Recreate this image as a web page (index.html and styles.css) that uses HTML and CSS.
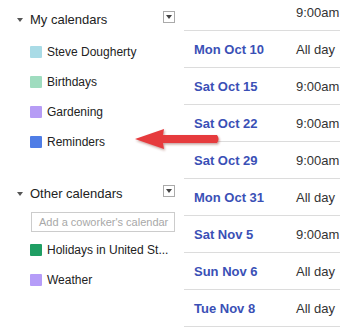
FILE: index.html
```html
<!DOCTYPE html>
<html lang="en">
<head>
    <meta charset="UTF-8">
    <title>Calendars</title>
    <link rel="stylesheet" href="styles.css">
</head>
<body>
    <div class="page">
        <div class="sidebar">
            <div class="group-head">
                <span class="caret"></span>
                <span class="group-title">My calendars</span>
                <span class="menu-btn"><span class="menu-caret"></span></span>
            </div>
            <div class="cal"><span class="swatch" style="background:#a9dbe6"></span>Steve Dougherty</div>
            <div class="cal"><span class="swatch" style="background:#9fdcbf"></span>Birthdays</div>
            <div class="cal"><span class="swatch" style="background:#b69cf5"></span>Gardening</div>
            <div class="cal"><span class="swatch" style="background:#4f7de6"></span>Reminders</div>

            <div class="group-head other">
                <span class="caret"></span>
                <span class="group-title">Other calendars</span>
                <span class="menu-btn"><span class="menu-caret"></span></span>
            </div>
            <div class="add-box">Add a coworker's calendar</div>
            <div class="cal"><span class="swatch" style="background:#1f9e63"></span>Holidays in United St...</div>
            <div class="cal"><span class="swatch" style="background:#b59cf8"></span>Weather</div>
        </div>

        <div class="agenda">
            <div class="row"><span class="date"></span><span class="time">9:00am</span></div>
            <div class="row"><span class="date">Mon Oct 10</span><span class="time">All day</span></div>
            <div class="row"><span class="date">Sat Oct 15</span><span class="time">9:00am</span></div>
            <div class="row"><span class="date">Sat Oct 22</span><span class="time">9:00am</span></div>
            <div class="row"><span class="date">Sat Oct 29</span><span class="time">9:00am</span></div>
            <div class="row"><span class="date">Mon Oct 31</span><span class="time">All day</span></div>
            <div class="row"><span class="date">Sat Nov 5</span><span class="time">9:00am</span></div>
            <div class="row"><span class="date">Sun Nov 6</span><span class="time">All day</span></div>
            <div class="row"><span class="date">Tue Nov 8</span><span class="time">All day</span></div>
        </div>

        <svg class="arrow" width="100" height="30" viewBox="0 0 100 30">
            <defs>
                <filter id="sh" x="-10%" y="-30%" width="120%" height="160%">
                    <feDropShadow dx="1" dy="1.5" stdDeviation="1.2" flood-color="#7a2a20" flood-opacity="0.45"/>
                </filter>
            </defs>
            <path d="M4 14 L33 4 L32 10 L86 10 Q89 14 86 18 L32 18 L33 24 Z" fill="#e63b3e" filter="url(#sh)"/>
        </svg>
    </div>
</body>
</html>
```

FILE: styles.css
```css
body {
    margin: 0;
    background: #fff;
    font-family: Arial, "Liberation Sans", sans-serif;
    color: #222;
}
.page {
    position: relative;
    display: flex;
    width: 340px;
    height: 329px;
    overflow: hidden;
}
.sidebar {
    width: 184px;
    flex-shrink: 0;
    padding-top: 6px;
}
.group-head {
    display: flex;
    align-items: center;
    height: 26px;
    margin-bottom: 5px;
    padding-left: 17px;
    font-size: 13px;
    color: #222;
}
.group-head.other {
    margin-top: 23px;
    margin-bottom: 6px;
}
.caret {
    width: 0;
    height: 0;
    border-left: 3px solid transparent;
    border-right: 3px solid transparent;
    border-top: 4px solid #555;
    margin-right: 7px;
    margin-top: 2px;
}
.group-title {
    flex: 1;
}
.menu-btn {
    box-sizing: border-box;
    width: 12px;
    height: 12px;
    margin-right: 9px;
    margin-top: -4px;
    border: 1px solid #aaa;
    display: flex;
    align-items: center;
    justify-content: center;
}
.menu-caret {
    width: 0;
    height: 0;
    border-left: 3px solid transparent;
    border-right: 3px solid transparent;
    border-top: 4px solid #444;
}
.cal {
    display: flex;
    align-items: center;
    height: 30px;
    padding-left: 30px;
    font-size: 12px;
    color: #222;
    white-space: nowrap;
}
.swatch {
    width: 12px;
    height: 12px;
    border-radius: 1px;
    margin-right: 5px;
}
.add-box {
    box-sizing: border-box;
    margin-left: 31px;
    width: 144px;
    height: 20px;
    margin-bottom: 3px;
    border: 1px solid #ccc;
    padding-left: 7px;
    font-size: 11px;
    line-height: 18px;
    color: #a8a8a8;
    white-space: nowrap;
    overflow: hidden;
}
.agenda {
    flex: 1;
    margin-top: -6px;
}
.row {
    display: flex;
    align-items: center;
    height: 36px;
    border-bottom: 1px solid #dcdcdc;
    font-size: 13px;
}
.date {
    width: 102px;
    padding-left: 10px;
    font-weight: bold;
    color: #3a50b6;
}
.time {
    color: #333;
    white-space: nowrap;
}
.arrow {
    position: absolute;
    left: 131px;
    top: 125px;
}
```
